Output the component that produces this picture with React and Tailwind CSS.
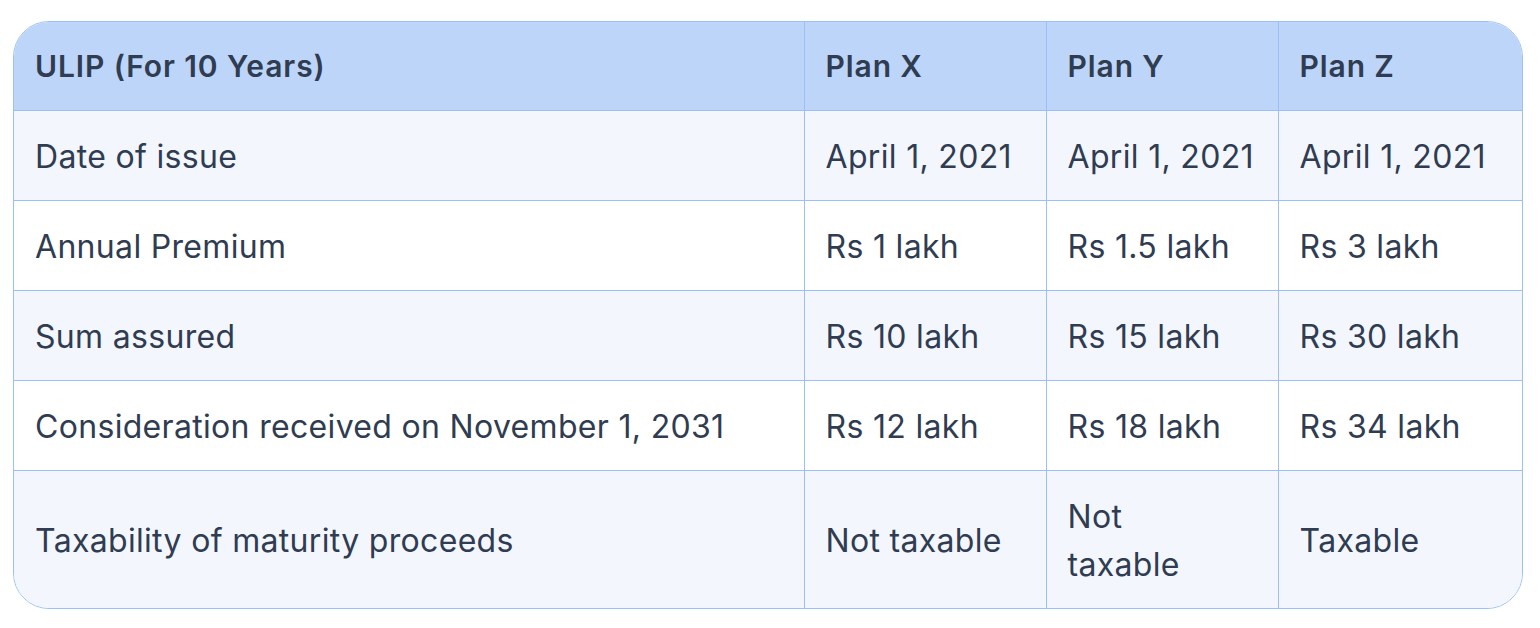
const rows = [
  { label: 'Date of issue', values: ['April 1, 2021', 'April 1, 2021', 'April 1, 2021'] },
  { label: 'Annual Premium', values: ['Rs 1 lakh', 'Rs 1.5 lakh', 'Rs 3 lakh'] },
  { label: 'Sum assured', values: ['Rs 10 lakh', 'Rs 15 lakh', 'Rs 30 lakh'] },
  { label: 'Consideration received on November 1, 2031', values: ['Rs 12 lakh', 'Rs 18 lakh', 'Rs 34 lakh'] },
  {
    label: 'Taxability of maturity proceeds',
    values: [
      'Not taxable',
      <>
        Not
        <br />
        taxable
      </>,
      'Taxable',
    ],
  },
];

export default function App() {
  return (
    <div className="min-h-screen bg-white pl-[13px] pt-[21px] font-['Inter',sans-serif] text-[#2f3c51]">
      <div className="w-[1510px] overflow-hidden rounded-[36px] border border-[#9cbff6]">
        <table className="w-full table-fixed border-collapse text-left">
          <colgroup>
            <col className="w-[790px]" />
            <col className="w-[242px]" />
            <col className="w-[232px]" />
            <col className="w-[244px]" />
          </colgroup>
          <thead>
            <tr className="h-[88px] bg-[#bdd5f8] text-[30px] font-semibold leading-[48px] tracking-[0.03em]">
              <th className="px-[21px] py-0 font-semibold">ULIP (For 10 Years)</th>
              <th className="border-l border-[#9cbff6] px-[21px] py-0 font-semibold">Plan X</th>
              <th className="border-l border-[#9cbff6] px-[21px] py-0 font-semibold">Plan Y</th>
              <th className="border-l border-[#9cbff6] px-[21px] py-0 font-semibold">Plan Z</th>
            </tr>
          </thead>
          <tbody className="text-[32px] leading-[48px] tracking-[0.01em]">
            {rows.map((row, i) => (
              <tr key={row.label} className={i % 2 === 0 ? 'bg-[#f3f6fd]' : 'bg-white'}>
                <td className="border-t border-[#9cbff6] px-[21px] pb-[19px] pt-[22px] align-middle">{row.label}</td>
                {row.values.map((v, j) => (
                  <td key={j} className="whitespace-nowrap border-l border-t border-[#9cbff6] px-[21px] pb-[19px] pt-[22px] align-middle">
                    {v}
                  </td>
                ))}
              </tr>
            ))}
          </tbody>
        </table>
      </div>
    </div>
  );
}
